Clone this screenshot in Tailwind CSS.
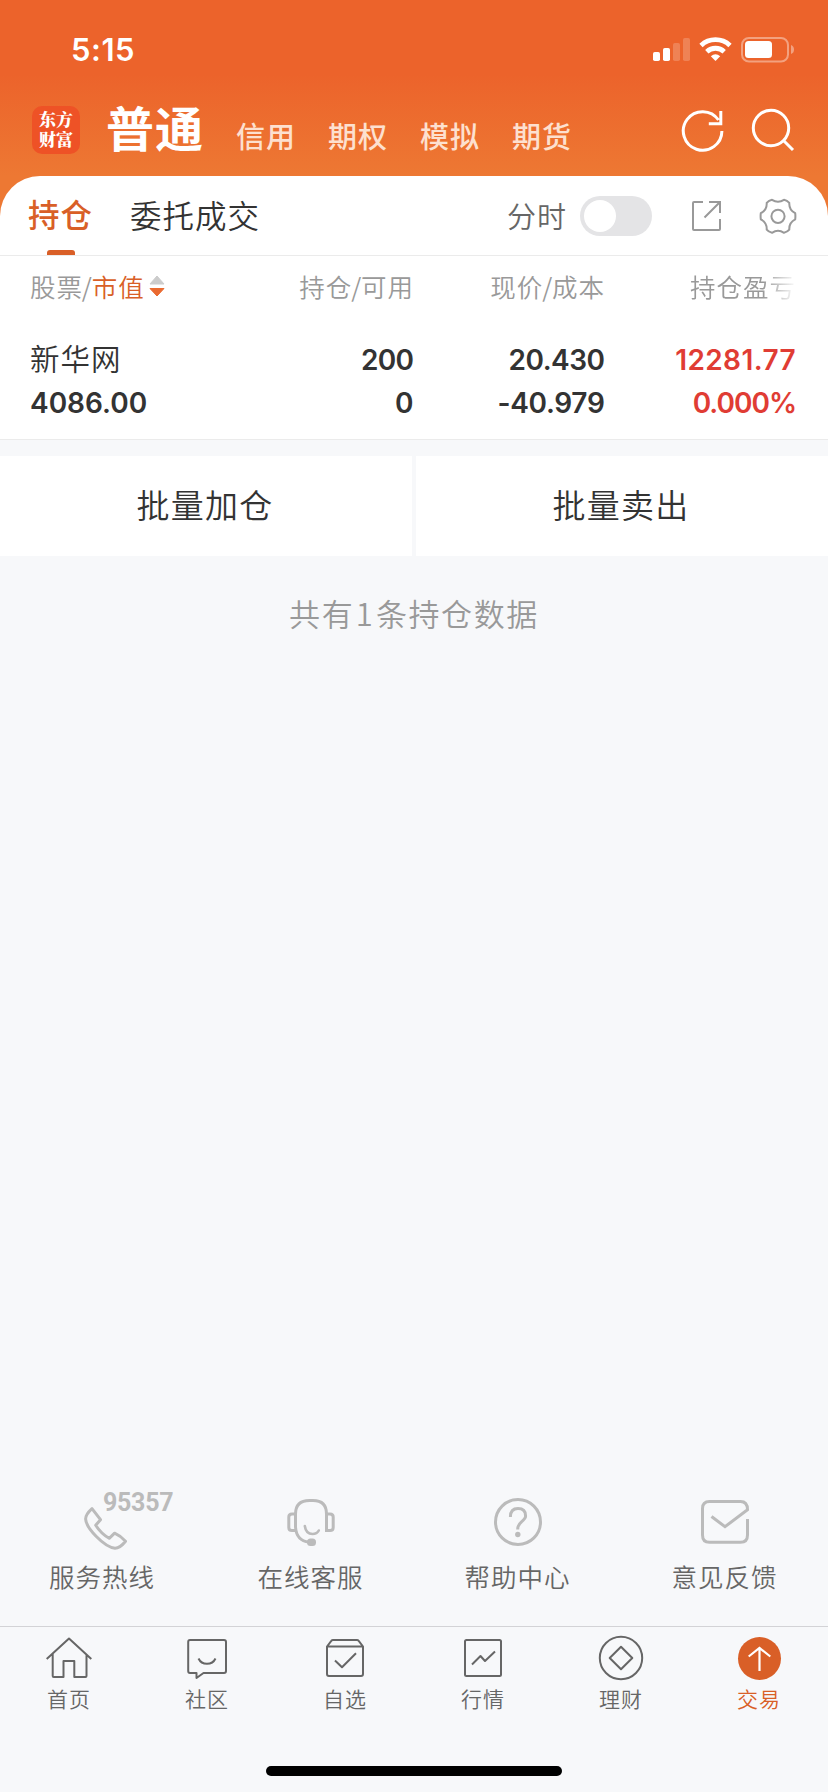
<!DOCTYPE html>
<html lang="zh-CN">
<head>
<meta charset="utf-8">
<title>持仓</title>
<script src="https://cdn.jsdelivr.net/npm/@tailwindcss/browser@4"></script>
</head>
<body class="bg-[#f7f8fa]">
<div class="w-[828px] h-[1792px] flex flex-col overflow-hidden whitespace-nowrap bg-[#f7f8fa] font-['Noto_Sans_CJK_SC',sans-serif] font-[350] text-[#333]">

  <div class="h-[255px] flex flex-col bg-[linear-gradient(#ec632b_0px,#ec632b_74px,#ed7833_176px)]">
    <!-- Status bar -->
    <div class="h-[84px] pl-[71px] pr-[34px] pt-[16px] flex items-center justify-between text-white">
      <span class="font-['Inter',sans-serif] font-semibold text-[31px] leading-[40px] tracking-[0.5px]">5:15</span>
      <svg class="w-[142px] h-[26px]" viewBox="652 37 142 26" fill="none">
        <g fill="#fff">
          <rect x="653" y="52" width="7" height="9" rx="1.8"/>
          <rect x="663" y="48" width="7" height="13" rx="1.8"/>
          <rect x="673" y="43" width="7" height="18" rx="1.8" opacity=".2"/>
          <rect x="683" y="38" width="7" height="23" rx="1.8" opacity=".2"/>
          <path d="M715.5 61 L710.8 56.3 Q715.5 52.2 720.2 56.3 Z"/>
          <rect x="745" y="41" width="27" height="17" rx="3.5"/>
          <path d="M791 45 Q794 46 794 49.5 Q794 53 791 54 Z" opacity=".4"/>
        </g>
        <path d="M701 45.4 A21.3 21.3 0 0 1 730 45.4 M706.8 51.7 A12.7 12.7 0 0 1 724.2 51.7" stroke="#fff" stroke-width="4.8"/>
        <rect x="742" y="38" width="46" height="23.5" rx="7" stroke="#fff" stroke-opacity=".4" stroke-width="2"/>
      </svg>
    </div>
    <!-- Account tabs -->
    <div class="h-[92px] pl-[32px] pr-[33px] flex items-start text-white">
      <div class="mt-[22px] size-[48px] rounded-[10px] bg-[#ee5226] pt-[3px] text-center font-['Noto_Serif_CJK_SC','Noto_Sans_CJK_SC',sans-serif] font-black text-[17px] leading-[20px]">东方<br>财富</div>
      <span class="mt-[10px] ml-[26px] w-[104px] font-bold text-[48px] leading-[64px] tracking-[1px]">普通</span>
      <div class="mt-[31px] ml-[26px] flex gap-[32px] font-medium text-[29px] leading-[40px] tracking-[1px] text-[#fde0cf]">
        <span>信用</span><span>期权</span><span>模拟</span><span>期货</span>
      </div>
      <svg class="mt-[24px] ml-auto w-[114px] h-[44px]" viewBox="681 108 114 44" fill="none" stroke="#fff" stroke-width="3">
        <path d="M721.9 131 A19.3 19.3 0 1 1 718.5 120 M720.8 111 V123.7 H708.8"/>
        <circle cx="771" cy="128" r="17.7"/>
        <path d="M783.5 140.5 L793 150"/>
      </svg>
    </div>
    <!-- Position tabs -->
    <div class="h-[79px] bg-white rounded-t-[40px] pl-[28px] pr-[31px] flex items-center">
      <div class="relative h-full w-[66px] pt-[14px] text-[#d95f27] font-medium text-[31.5px] leading-[46px] tracking-[1px]">持仓
        <div class="absolute left-[19px] bottom-0 w-[28px] h-[5px] rounded-t-[3px] bg-[#d95f27]"></div>
      </div>
      <span class="ml-[36px] -mt-[4px] text-[31.5px] leading-[46px] tracking-[1px]">委托成交</span>
      <span class="ml-auto -mt-[2px] text-[29px] leading-[46px] tracking-[1px] text-[#666]">分时</span>
      <div class="ml-[13px] w-[72px] h-[40px] rounded-full bg-[#e4e4e6] p-[4px]"><div class="size-[32px] rounded-full bg-white"></div></div>
      <svg class="ml-[37px] w-[108px] h-[40px]" viewBox="689 196 108 40" fill="none" stroke="#999" stroke-width="2">
        <path d="M703 202 H694 Q693 202 693 203 V229 Q693 230 694 230 H719 Q720 230 720 229 V219 M709 202 H720 V213 M704.5 217.5 L719.5 202.5"/>
        <circle cx="778" cy="216.3" r="6.6"/>
        <path transform="translate(778 216.3)" stroke-linejoin="round" d="M17.2 -3.1 Q17.6 0 17.2 3.1 Q10.9 6.3 11.3 13.4 Q9.2 15.9 6 16.5 Q0 12.6 -6 16.5 Q-9.2 15.9 -11.3 13.4 Q-10.9 6.3 -17.2 3.1 Q-17.6 0 -17.2 -3.1 Q-10.9 -6.3 -11.3 -13.4 Q-9.2 -15.9 -6 -16.5 Q0 -12.6 6 -16.5 Q9.2 -15.9 11.3 -13.4 Q10.9 -6.3 17.2 -3.1 Z"/>
      </svg>
    </div>
  </div>

  <!-- Holdings table -->
  <div class="h-[185px] bg-white border-y border-[#ebebeb] pl-[30px] pr-[32px] pt-[11px]">
    <div class="grid grid-cols-[220px_164px_191px_191px] h-[40px] leading-[38px] text-[25.5px] tracking-[1px] text-[#999] text-right">
      <div class="flex items-center h-[37px]">股票<span class="-mx-[1.2px]">/</span><span class="text-[#d95f27]">市值</span>
        <svg class="ml-[4px] w-[16px] h-[22px]" viewBox="148 277 16 22"><path d="M149 286 L156 278 L163 286 Z" fill="#ccc" stroke="#ccc" stroke-linejoin="round"/><path d="M149 290.5 L156 298 L163 290.5 Z" fill="#ea6a30" stroke="#ea6a30" stroke-linejoin="round"/></svg>
      </div>
      <span>持仓<span class="-mx-[1.2px]">/</span>可用</span><span>现价<span class="-mx-[1.2px]">/</span>成本</span>
      <span class="[mask-image:linear-gradient(to_right,#000_158px,transparent_192px)]">持仓盈亏</span>
    </div>
    <div class="mt-[32px] grid grid-cols-[220px_163.5px_191px_191.5px] leading-[43px] font-['Inter',sans-serif] font-semibold text-[28px] text-right">
      <span class="-mt-[3px] text-left font-['Noto_Sans_CJK_SC',sans-serif] font-[350] text-[29.5px] tracking-[1px]">新华网</span><span class="tracking-[-0.6px]">200</span><span class="tracking-[-0.5px]">20.430</span><span class="tracking-[0.4px] text-[#e03c34]">12281.77</span>
      <span class="text-left">4086.00</span><span>0</span><span class="tracking-[-0.3px]">-40.979</span><span class="tracking-[-1px] text-[#e03c34]">0.000%</span>
    </div>
  </div>

  <!-- Batch actions -->
  <div class="mt-[16px] h-[100px] grid grid-cols-2 gap-[4px] text-[33px] leading-[96px] tracking-[1.3px] text-center">
    <div class="bg-white pr-[2px]">批量加仓</div>
    <div class="bg-white pr-[2px]">批量卖出</div>
  </div>
  <div class="mt-[34px] text-center text-[31px] leading-[46px] tracking-[1.6px] text-[#999]">共有<span class="mx-[1.5px]">1</span>条持仓数据</div>

  <!-- Service links -->
  <div class="mt-auto h-[136px] grid grid-cols-4 text-center text-[25.5px] leading-[40px] tracking-[1px] text-[#666]">
    <div class="relative flex flex-col items-center">
      <svg class="w-[54px] h-[66px]" viewBox="76 1490 54 66" fill="none" stroke="#bbb" stroke-width="3" stroke-linejoin="round"><path d="M91 1508.7 L99.5 1519.7 L94.7 1525.2 Q100 1533.5 108.2 1538.3 L113.6 1533.2 Q119 1535.5 124.5 1541.3 Q119 1548.3 114 1548.3 C103 1547 85 1528 84.6 1519 Q84.6 1514.5 91 1508.7 Z"/></svg>
      <span class="absolute left-[103px] top-[-2px] leading-[30px] font-['Roboto',sans-serif] font-bold text-[25px] tracking-[-0.3px] text-[#bbb]">95357</span>
      <span class="pr-[3px]">服务热线</span>
    </div>
    <div class="flex flex-col items-center">
      <svg class="w-[54px] h-[66px]" viewBox="284 1490 54 66" fill="none" stroke="#bbb" stroke-width="3"><path d="M326.5 1532 V1514 Q326.5 1500.5 313 1500.5 H309.5 Q295.5 1500.5 295.5 1514 V1527 Q296.5 1541 309 1542"/><path d="M295.5 1514 H292 Q288.8 1514 288.8 1517 V1527.5 Q288.8 1530.5 292 1530.5 H295.5 M326.5 1514 H330 Q333.2 1514 333.2 1517 V1527.5 Q333.2 1530.5 330 1530.5 H326.5"/><path d="M304.8 1526 Q306 1534 312.5 1534 Q317 1534 318.8 1530.5" stroke-linecap="round" stroke-width="2.6"/><rect x="307" y="1538.5" width="9" height="7.5" rx="3.5" fill="#bbb" stroke="none"/></svg>
      <span>在线客服</span>
    </div>
    <div class="flex flex-col items-center">
      <svg class="w-[54px] h-[66px]" viewBox="491 1490 54 66" fill="none" stroke="#bbb" stroke-width="3"><circle cx="518" cy="1522" r="22.5"/><path d="M510.4 1517 Q510.4 1508.6 518 1508.6 Q525.6 1508.6 525.6 1516 Q525.6 1518.5 521.5 1521.8 Q517.7 1525 517.7 1529.5"/><circle cx="517.8" cy="1534.5" r="2.7" fill="#bbb" stroke="none"/></svg>
      <span>帮助中心</span>
    </div>
    <div class="flex flex-col items-center">
      <svg class="w-[54px] h-[66px]" viewBox="698 1490 54 66" fill="none" stroke="#bbb" stroke-width="3"><path d="M747.5 1519 V1535 Q747.5 1542.3 740.5 1542.3 H709.5 Q702.5 1542.3 702.5 1535 V1508.5 Q702.5 1501.5 709.5 1501.5 H740.5 Q747.5 1501.5 747.5 1509.8 L725 1526.7 L711.5 1516.5"/></svg>
      <span>意见反馈</span>
    </div>
  </div>

  <!-- Tab bar -->
  <div class="relative h-[166px] border-t border-[#d3d3d6] pt-[6px] grid grid-cols-6 text-center text-[21px] leading-[30px] tracking-[1px] text-[#666]">
    <div class="flex flex-col items-center">
      <svg class="w-[50px] h-[50px]" viewBox="44 1633 50 50" fill="none" stroke="#666" stroke-width="2" stroke-linejoin="round"><path d="M46.7 1659 L69 1638.5 L91.3 1659 M52.7 1654 V1676 Q52.7 1677 53.7 1677 H63.5 V1661 H74.3 V1677 H85.5 Q86.5 1677 86.5 1676 V1654"/></svg>
      <span>首页</span>
    </div>
    <div class="flex flex-col items-center">
      <svg class="w-[50px] h-[50px]" viewBox="182 1633 50 50" fill="none" stroke="#666" stroke-width="2" stroke-linejoin="round"><path d="M190 1640 H224 Q226 1640 226 1642 V1671 Q226 1673 224 1673 H217.5 L203.5 1673 L196.5 1678 V1673 H190 Q188.2 1673 188.2 1671 V1642 Q188.2 1640 190 1640 Z M198.5 1658.5 Q201 1663.8 207 1663.8 Q213 1663.8 215.5 1658.5"/></svg>
      <span>社区</span>
    </div>
    <div class="flex flex-col items-center">
      <svg class="w-[50px] h-[50px]" viewBox="320 1633 50 50" fill="none" stroke="#666" stroke-width="2" stroke-linejoin="round"><path d="M327 1646.5 L331.5 1640.7 Q332 1640 333 1640 H357 Q358 1640 358.5 1640.7 L363 1646.5 V1674 Q363 1676 361 1676 H329 Q327 1676 327 1674 Z H363 M335 1660.5 L342 1667.3 L356 1653.3"/></svg>
      <span>自选</span>
    </div>
    <div class="flex flex-col items-center">
      <svg class="w-[50px] h-[50px]" viewBox="458 1633 50 50" fill="none" stroke="#666" stroke-width="2" stroke-linejoin="round"><rect x="465" y="1640" width="36" height="36" rx="1.5"/><path d="M472 1664.5 L480.5 1656 L485 1661 L495 1651.5"/></svg>
      <span>行情</span>
    </div>
    <div class="flex flex-col items-center">
      <svg class="w-[50px] h-[50px]" viewBox="596 1633 50 50" fill="none" stroke="#666" stroke-width="2" stroke-linejoin="round"><circle cx="621" cy="1658" r="21.2"/><path d="M621 1646.7 L632.3 1658 L621 1669.3 L609.7 1658 Z"/></svg>
      <span>理财</span>
    </div>
    <div class="flex flex-col items-center text-[#d95f27]">
      <svg class="w-[50px] h-[50px]" viewBox="734 1633 50 50" fill="none"><circle cx="759.5" cy="1658.5" r="21.5" fill="#d95f27"/><path d="M748.7 1656.5 L759.5 1648 L770.3 1656.5 M759.5 1648 V1671" stroke="#fff" stroke-width="2.2"/></svg>
      <span>交易</span>
    </div>
    <div class="absolute left-[266px] bottom-[16px] w-[296px] h-[10px] rounded-full bg-black"></div>
  </div>
</div>
</body>
</html>
